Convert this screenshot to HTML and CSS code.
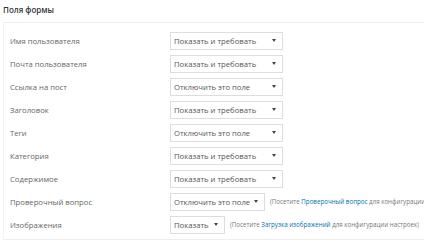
FILE: index.html
```html
<!DOCTYPE html>
<html lang="ru">
<head>
    <meta charset="UTF-8">
    <title>Поля формы</title>
    <link rel="stylesheet" href="styles.css">
</head>
<body>
    <h3 class="title">Поля формы</h3>
    <div class="panel">
        <div class="row">
            <span class="label">Имя пользователя</span>
            <span class="select w-long">Показать и требовать<svg viewBox="0 0 4 3"><path d="M0 0h4L2 3z"/></svg></span>
        </div>
        <div class="row">
            <span class="label">Почта пользователя</span>
            <span class="select w-long">Показать и требовать<svg viewBox="0 0 4 3"><path d="M0 0h4L2 3z"/></svg></span>
        </div>
        <div class="row">
            <span class="label">Ссылка на пост</span>
            <span class="select w-long">Отключить это поле<svg viewBox="0 0 4 3"><path d="M0 0h4L2 3z"/></svg></span>
        </div>
        <div class="row">
            <span class="label">Заголовок</span>
            <span class="select w-long">Показать и требовать<svg viewBox="0 0 4 3"><path d="M0 0h4L2 3z"/></svg></span>
        </div>
        <div class="row">
            <span class="label">Теги</span>
            <span class="select w-long">Отключить это поле<svg viewBox="0 0 4 3"><path d="M0 0h4L2 3z"/></svg></span>
        </div>
        <div class="row">
            <span class="label">Категория</span>
            <span class="select w-long">Показать и требовать<svg viewBox="0 0 4 3"><path d="M0 0h4L2 3z"/></svg></span>
        </div>
        <div class="row">
            <span class="label">Содержимое</span>
            <span class="select w-long">Показать и требовать<svg viewBox="0 0 4 3"><path d="M0 0h4L2 3z"/></svg></span>
        </div>
        <div class="row">
            <span class="label">Проверочный вопрос</span>
            <span class="select w-mid">Отключить это поле<svg viewBox="0 0 4 3"><path d="M0 0h4L2 3z"/></svg></span>
            <span class="note">(Посетите <a href="#">Проверочный вопрос</a> для конфигурации настроек)</span>
        </div>
        <div class="row">
            <span class="label">Изображения</span>
            <span class="select w-short">Показать<svg viewBox="0 0 4 3"><path d="M0 0h4L2 3z"/></svg></span>
            <span class="note">(Посетите <a href="#">Загрузка изображений</a> для конфигурации настроек)</span>
        </div>
    </div>
</body>
</html>
```
FILE: styles.css
```css
/* Общие стили */
* { margin: 0; padding: 0; box-sizing: border-box; }
body { background: #fff; font-family: "Open Sans", Arial, sans-serif; color: #666; overflow: hidden; }

.title { font-size: 8px; font-weight: 600; color: #32373c; padding: 4px 0 0 3px; height: 22px; }

/* Панель с полями */
.panel { margin-left: 3px; border-top: 1px solid #eee; border-left: 1px solid #f4f4f4; border-bottom: 1px solid #eee; padding: 6px 0 3px; }
.row { display: flex; align-items: center; height: 23px; white-space: nowrap; }
.label { flex-shrink: 0; width: 166px; padding-left: 6px; font-size: 7.7px; }

.select { flex-shrink: 0; display: flex; align-items: center; justify-content: space-between; height: 18px; padding: 0 6px 0 3px; border: 1px solid #ddd; background: #fff; font-size: 7.7px; color: #555; }
.select svg { width: 4px; height: 3px; fill: #444; }
.w-long { width: 113px; }
.w-mid { width: 95px; }
.w-short { width: 55px; }

.note { margin-left: 5px; font-size: 6.2px; color: #777; overflow: hidden; }
.note a { color: #0073aa; text-decoration: none; }
```
